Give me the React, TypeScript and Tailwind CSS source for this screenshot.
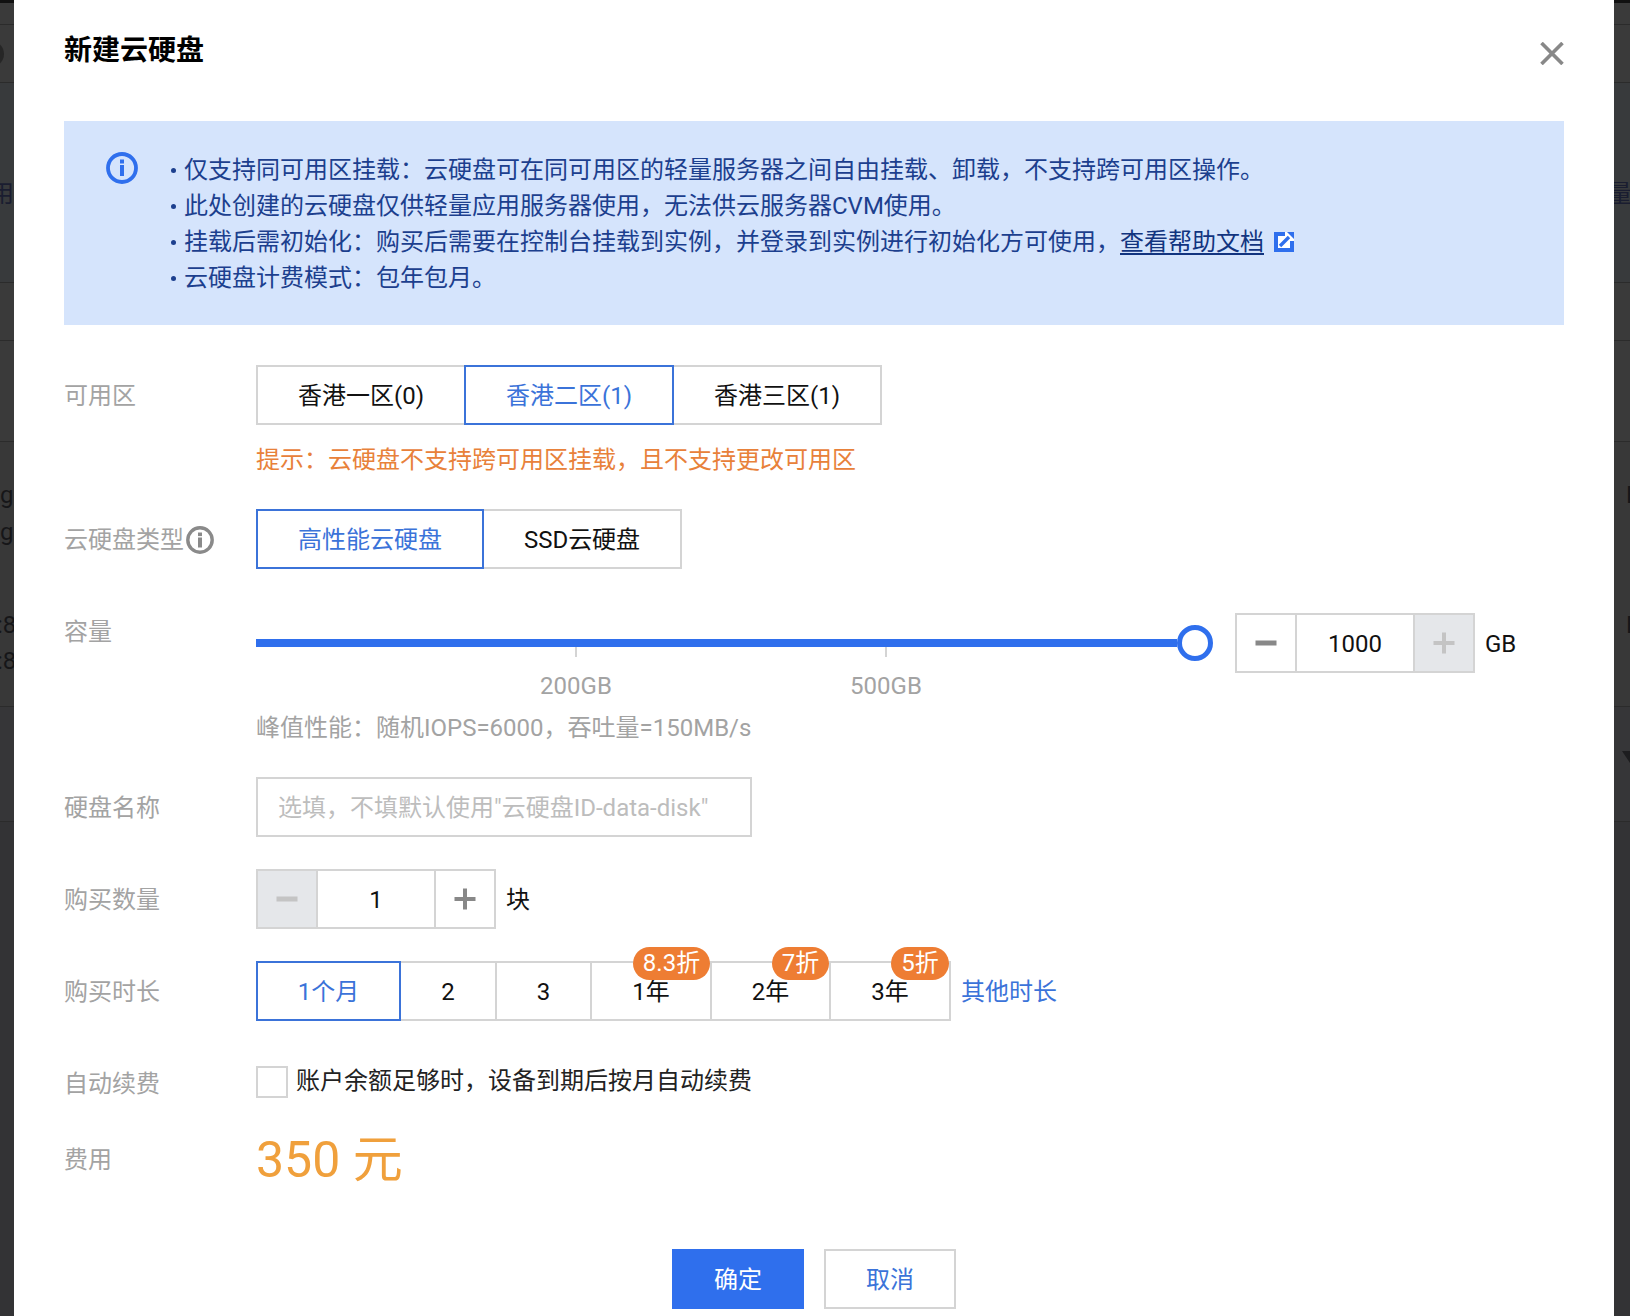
import React from 'react';

const segBase = 'relative flex items-center justify-center h-[60px] pt-[2px] -ml-[2px] first:ml-0 border-2 bg-white';
const segIdle = 'border-[#d4d4d4] text-[#111]';
const segActive = 'z-10 border-[#3b73d9] text-[#3b73d9]';

function Seg({ w, active, children }: { w: string; active?: boolean; children: React.ReactNode }) {
  return <div className={`${segBase} ${w} ${active ? segActive : segIdle}`}>{children}</div>;
}

function Badge({ w, children }: { w: string; children: React.ReactNode }) {
  return (
    <span className={`absolute -top-[16px] right-0 z-20 h-[33px] ${w} rounded-full bg-[#ee7d33] text-white text-center leading-[33px]`}>
      {children}
    </span>
  );
}

function Minus({ color }: { color: string }) {
  return (
    <svg width="22" height="22" viewBox="0 0 22 22">
      <rect x="0.5" y="8.5" width="21" height="5" fill={color} />
    </svg>
  );
}

function Plus({ color }: { color: string }) {
  return (
    <svg width="22" height="22" viewBox="0 0 22 22">
      <rect x="0.5" y="9" width="21" height="4" fill={color} />
      <rect x="9" y="0.5" width="4" height="21" fill={color} />
    </svg>
  );
}

function Stepper({ value, minusOff, plusOff }: { value: string; minusOff?: boolean; plusOff?: boolean }) {
  return (
    <div className="flex h-[60px] w-[240px] border-2 border-[#d4d4d4] bg-white">
      <div className={`flex w-[60px] items-center justify-center border-r-2 border-[#d4d4d4] ${minusOff ? 'bg-[#e5e7ea]' : ''}`}>
        <Minus color={minusOff ? '#c4c4c4' : '#888888'} />
      </div>
      <div className="flex w-[116px] items-center justify-center pt-[2px] text-[#111]">{value}</div>
      <div className={`flex flex-1 items-center justify-center border-l-2 border-[#d4d4d4] ${plusOff ? 'bg-[#e5e7ea]' : ''}`}>
        <Plus color={plusOff ? '#c4c4c4' : '#888888'} />
      </div>
    </div>
  );
}

function Label({ children, cls = 'h-[60px] pt-[2px]' }: { children: React.ReactNode; cls?: string }) {
  return <div className={`flex w-[192px] shrink-0 items-center text-[#a3a3a3] ${cls}`}>{children}</div>;
}

function BackStrip({ side }: { side: 'left' | 'right' }) {
  const left = side === 'left';
  const row = 'border-b border-[#2b2b2b] overflow-hidden whitespace-nowrap';
  return (
    <div className={`flex h-full flex-col overflow-hidden bg-[#333335] text-[#161618] ${left ? 'w-[14px]' : 'w-[16px]'}`}>
      <div className="h-[3px] shrink-0 bg-[#111]" />
      <div className={`h-[22px] shrink-0 bg-[#3a3a3a] ${row}`} />
      <div className={`flex h-[58px] shrink-0 items-center bg-[#3a3a3a] ${row}`}>
        {left && <span className="-ml-[22px] h-[26px] w-[26px] shrink-0 rounded-full bg-[#262626]" />}
      </div>
      <div className={`h-[200px] shrink-0 bg-[#383a3c] pt-[99px] text-[#1a1d30] ${row}`}>
        <div className={`leading-[24px] ${left ? '-ml-[10px]' : '-ml-[6px]'}`}>{left ? '用' : '量应'}</div>
      </div>
      <div className={`h-[58px] shrink-0 bg-[#3a3a3a] ${row}`} />
      <div className={`h-[101px] shrink-0 bg-[#3a3a3a] ${row}`} />
      <div className={`h-[265px] shrink-0 bg-[#383838] ${row}`}>
        {left ? (
          <div className="leading-[24px]">
            <div className="mt-[41px]">g</div>
            <div className="mt-[13px]">g</div>
            <div className="-ml-[3px] mt-[69px]">:8</div>
            <div className="-ml-[3px] mt-[12px]">:8</div>
          </div>
        ) : (
          <div className="leading-[24px]">
            <div className="ml-[12px] mt-[41px]">E</div>
            <div className="ml-[12px] mt-[106px]">E</div>
          </div>
        )}
      </div>
      <div className={`h-[115px] shrink-0 bg-[#363638] ${row}`}>
        {!left && (
          <svg className="ml-[8px] mt-[44px]" width="8" height="12" viewBox="0 0 8 12">
            <polygon points="0,0 8,0 8,12" fill="#1d1d1f" />
          </svg>
        )}
      </div>
      <div className="flex-1" />
    </div>
  );
}

export default function App() {
  return (
    <div className="flex h-[1316px] w-[1630px] overflow-hidden bg-[#333335] text-[24px] leading-[36px] [font-family:'Roboto','Noto_Sans_CJK_SC',sans-serif]">
      <BackStrip side="left" />
      <div className="h-full w-[1600px] shrink-0 bg-white px-[50px]">
        <div className="flex h-[121px] items-start justify-between">
          <h1 className="pt-[32px] text-[28px] font-bold leading-[38px] text-[#000]">新建云硬盘</h1>
          <svg className="mt-[42px]" width="24" height="23" viewBox="0 0 24 23">
            <path d="M1.5 1 22.5 22M22.5 1 1.5 22" stroke="#888888" strokeWidth="3.6" fill="none" />
          </svg>
        </div>

        <div className="flex h-[204px] bg-[#d5e4fc] pl-[42px] pt-[31px] text-[#1c3f8e]">
          <svg className="shrink-0" width="32" height="32" viewBox="0 0 32 32">
            <circle cx="16" cy="16" r="14" fill="none" stroke="#2f6fed" strokeWidth="3.8" />
            <rect x="14" y="7.5" width="4" height="4" fill="#2f6fed" />
            <rect x="14" y="13" width="4" height="11" fill="#2f6fed" />
          </svg>
          <ul className="ml-[33px]">
            <li className="flex items-center"><span className="mr-[8px] h-[5px] w-[5px] rounded-full bg-[#1c3f8e]" />仅支持同可用区挂载：云硬盘可在同可用区的轻量服务器之间自由挂载、卸载，不支持跨可用区操作。</li>
            <li className="flex items-center"><span className="mr-[8px] h-[5px] w-[5px] rounded-full bg-[#1c3f8e]" />此处创建的云硬盘仅供轻量应用服务器使用，无法供云服务器CVM使用。</li>
            <li className="flex items-center">
              <span className="mr-[8px] h-[5px] w-[5px] rounded-full bg-[#1c3f8e]" />挂载后需初始化：购买后需要在控制台挂载到实例，并登录到实例进行初始化方可使用，
              <a className="underline decoration-2 underline-offset-[3px] text-[#12347f]">查看帮助文档</a>
              <svg className="ml-[10px]" width="20" height="20" viewBox="0 0 20 20">
                <rect width="20" height="20" fill="#2f6fed" />
                <rect x="4" y="4" width="12" height="12" fill="#ffffff" />
                <polygon points="11,0 14,0 20,6 20,9 16,9 11,4" fill="#ffffff" />
                <path d="M6 14 15 5" stroke="#2f6fed" strokeWidth="3.4" fill="none" />
                <polygon points="13,0 20,0 20,7" fill="#2f6fed" />
              </svg>
            </li>
            <li className="flex items-center"><span className="mr-[8px] h-[5px] w-[5px] rounded-full bg-[#1c3f8e]" />云硬盘计费模式：包年包月。</li>
          </ul>
        </div>

        <div className="mt-[40px] flex">
          <Label>可用区</Label>
          <div>
            <div className="flex">
              <Seg w="w-[210px]">香港一区(0)</Seg>
              <Seg w="w-[210px]" active>香港二区(1)</Seg>
              <Seg w="w-[210px]">香港三区(1)</Seg>
            </div>
            <div className="mt-[17px] text-[#e8813a]">提示：云硬盘不支持跨可用区挂载，且不支持更改可用区</div>
          </div>
        </div>

        <div className="mt-[31px] flex">
          <Label>
            云硬盘类型
            <svg className="ml-[2px]" width="28" height="28" viewBox="0 0 28 28">
              <circle cx="14" cy="14" r="12.2" fill="none" stroke="#8a8a8a" strokeWidth="3.4" />
              <rect x="12" y="6.5" width="4" height="3.6" fill="#8a8a8a" />
              <rect x="12" y="11.5" width="4" height="10" fill="#8a8a8a" />
            </svg>
          </Label>
          <div className="flex">
            <Seg w="w-[228px]" active>高性能云硬盘</Seg>
            <Seg w="w-[200px]">SSD云硬盘</Seg>
          </div>
        </div>

        <div className="mt-[33px] flex">
          <Label cls="h-[60px]">容量</Label>
          <div className="pt-[11px]">
            <div className="flex items-center">
              <div className="flex w-[957px] items-center">
                <div className="h-[8px] flex-1 bg-[#2f6fed]" />
                <div className="h-[36px] w-[36px] rounded-full border-[5px] border-[#2f6fed] bg-white" />
              </div>
              <div className="ml-[22px]"><Stepper value="1000" plusOff /></div>
              <span className="ml-[10px] pt-[2px] text-[#111]">GB</span>
            </div>
            <div className="-mt-[26px] ml-[260px] flex text-[#a3a3a3]">
              <div className="flex w-[120px] flex-col items-center">
                <div className="h-[10px] w-[2px] bg-[#d4d4d4]" />
                <div className="mt-[11px]">200GB</div>
              </div>
              <div className="ml-[190px] flex w-[120px] flex-col items-center">
                <div className="h-[10px] w-[2px] bg-[#d4d4d4]" />
                <div className="mt-[11px]">500GB</div>
              </div>
            </div>
            <div className="mt-[6px] text-[#a3a3a3]">峰值性能：随机IOPS=6000，吞吐量=150MB/s</div>
          </div>
        </div>

        <div className="mt-[31px] flex">
          <Label>硬盘名称</Label>
          <input
            readOnly
            placeholder={'选填，不填默认使用"云硬盘ID-data-disk"'}
            className="h-[60px] w-[496px] border-2 border-[#d4d4d4] bg-white pl-[20px] pt-[2px] outline-none placeholder:text-[#bdbdbd]"
          />
        </div>

        <div className="mt-[32px] flex">
          <Label>购买数量</Label>
          <Stepper value="1" minusOff />
          <span className="ml-[10px] flex items-center pt-[2px] text-[#111]">块</span>
        </div>

        <div className="mt-[32px] flex">
          <Label>购买时长</Label>
          <div className="flex">
            <Seg w="w-[145px]" active>1个月</Seg>
            <Seg w="w-[98px]">2</Seg>
            <Seg w="w-[97px]">3</Seg>
            <Seg w="w-[122px]">1年<Badge w="w-[77px]">8.3折</Badge></Seg>
            <Seg w="w-[121px]">2年<Badge w="w-[57px]">7折</Badge></Seg>
            <Seg w="w-[122px]">3年<Badge w="w-[58px]">5折</Badge></Seg>
          </div>
          <a className="ml-[10px] flex items-center pt-[2px] text-[#3b73d9]">其他时长</a>
        </div>

        <div className="mt-[32px] flex">
          <Label>自动续费</Label>
          <div className="flex items-center self-start pt-[12px]">
            <div className="h-[32px] w-[32px] border-2 border-[#d4d4d4] bg-white" />
            <span className="ml-[8px] -mt-[2px] text-[#222]">账户余额足够时，设备到期后按月自动续费</span>
          </div>
        </div>

        <div className="mt-[18px] flex">
          <Label cls="h-[56px] pt-[2px]">费用</Label>
          <div className="text-[50px] leading-[58px] text-[#f0a03c]">350 元</div>
        </div>

        <div className="mt-[60px] flex justify-center gap-[20px]">
          <button className="h-[60px] w-[132px] bg-[#2f6fed] pt-[2px] text-white">确定</button>
          <button className="h-[60px] w-[132px] border-2 border-[#d4d4d4] bg-white pt-[2px] text-[#3b73d9]">取消</button>
        </div>
      </div>
      <BackStrip side="right" />
    </div>
  );
}
